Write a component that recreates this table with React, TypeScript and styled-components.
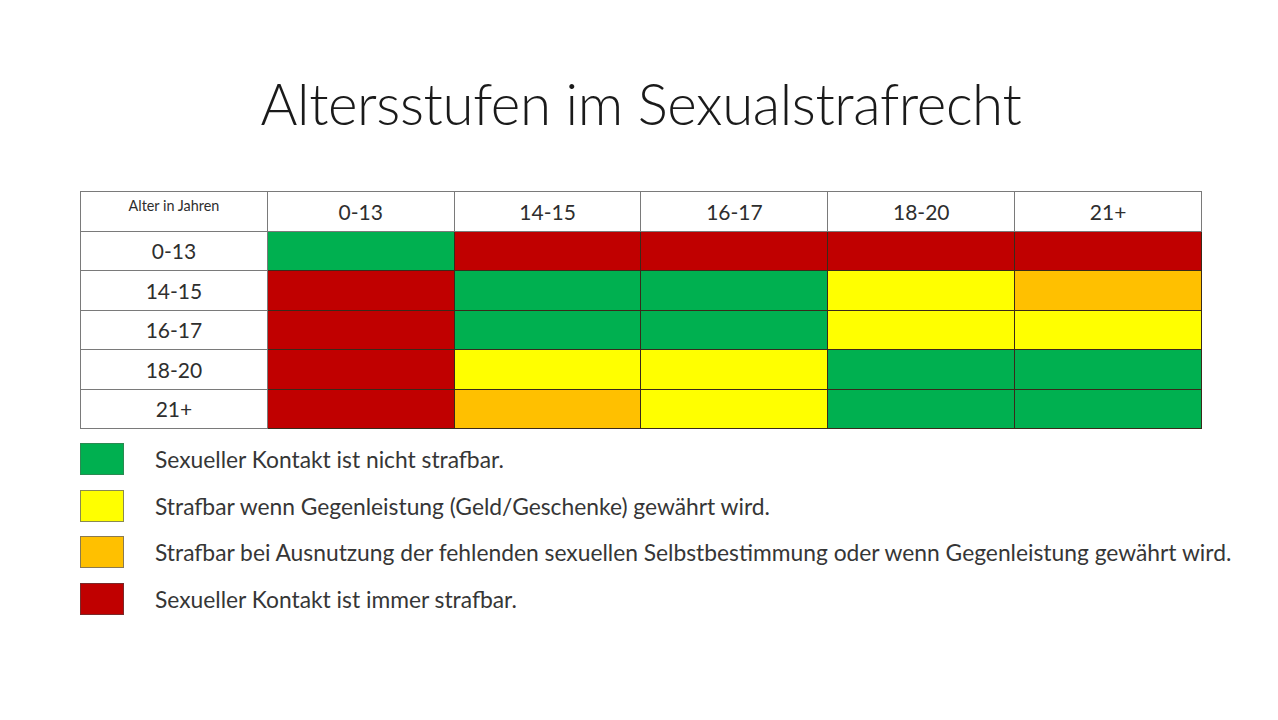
import React from "react";
import styled, { createGlobalStyle } from "styled-components";

const Global = createGlobalStyle`
  html, body { margin: 0; padding: 0; background: #ffffff; }
  body { font-family: Lato, "Open Sans", "Liberation Sans", sans-serif; }
`;

const Slide = styled.div`
  width: 1278px;
  height: 720px;
  background: #ffffff;
  display: flex;
  flex-direction: column;
  align-items: flex-start;
  box-sizing: border-box;
  padding: 0 0 0 80px;
  overflow: hidden;
`;

const Title = styled.h1`
  margin: 70px 0 0 0;
  width: 1122px;
  text-align: center;
  font-family: Lato, "Open Sans", sans-serif;
  font-weight: 300;
  font-size: 56.5px;
  line-height: 66px;
  color: #1a1a1a;
  letter-spacing: -0.4px;
`;

const Grid = styled.div`
  margin-top: 55px;
  width: 1122px;
  height: 238px;
  display: grid;
  grid-template-columns: repeat(6, 1fr);
  grid-template-rows: repeat(6, 1fr);
  border-top: 1px solid #7a7a7a;
  border-left: 1px solid #7a7a7a;
  box-sizing: border-box;
`;

const colors: Record<string, string> = {
  g: "#00b050",
  y: "#ffff00",
  o: "#ffc000",
  r: "#c00000",
};

const Cell = styled.div<{ $bg?: string; $small?: boolean }>`
  background: ${(p) => p.$bg || "#ffffff"};
  border-right: 1px solid ${(p) => (p.$bg ? "#3a2a1a" : "#7a7a7a")};
  border-bottom: 1px solid ${(p) => (p.$bg ? "#3a2a1a" : "#7a7a7a")};
  display: flex;
  align-items: ${(p) => (p.$small ? "flex-start" : "center")};
  justify-content: center;
  padding-top: ${(p) => (p.$small ? "5px" : "0")};
  box-sizing: border-box;
  font-family: Lato, "Open Sans", sans-serif;
  font-size: ${(p) => (p.$small ? "14.4px" : "21px")};
  color: #2e2e2e;
`;

const Legend = styled.div`
  margin-top: 14px;
  display: flex;
  flex-direction: column;
  gap: 14.7px;
`;

const LegendRow = styled.div`
  display: flex;
  align-items: center;
  gap: 31px;
  height: 32px;
`;

const Swatch = styled.div<{ $bg: string; $border: string }>`
  width: 44px;
  height: 32px;
  box-sizing: border-box;
  background: ${(p) => p.$bg};
  border: 1px solid ${(p) => p.$border};
`;

const LegendText = styled.span`
  font-family: Lato, "Open Sans", sans-serif;
  font-size: 22.8px;
  color: #363636;
  letter-spacing: 0px;
`;

const cols = ["0-13", "14-15", "16-17", "18-20", "21+"];
const matrix = [
  ["g", "r", "r", "r", "r"],
  ["r", "g", "g", "y", "o"],
  ["r", "g", "g", "y", "y"],
  ["r", "y", "y", "g", "g"],
  ["r", "o", "y", "g", "g"],
];

const legend = [
  { c: "#00b050", b: "#2b8a52", t: "Sexueller Kontakt ist nicht strafbar." },
  { c: "#ffff00", b: "#8a8a50", t: "Strafbar wenn Gegenleistung (Geld/Geschenke) gewährt wird." },
  {
    c: "#ffc000",
    b: "#8a7a50",
    t: "Strafbar bei Ausnutzung der fehlenden sexuellen Selbstbestimmung oder wenn Gegenleistung gewährt wird.",
  },
  { c: "#c00000", b: "#7a2a2a", t: "Sexueller Kontakt ist immer strafbar." },
];

export default function App() {
  return (
    <>
      <Global />
      <Slide>
        <Title>Altersstufen im Sexualstrafrecht</Title>
        <Grid>
          <Cell $small>Alter in Jahren</Cell>
          {cols.map((c) => (
            <Cell key={c}>{c}</Cell>
          ))}
          {matrix.map((row, i) => (
            <React.Fragment key={i}>
              <Cell>{cols[i]}</Cell>
              {row.map((k, j) => (
                <Cell key={j} $bg={colors[k]} />
              ))}
            </React.Fragment>
          ))}
        </Grid>
        <Legend>
          {legend.map((l) => (
            <LegendRow key={l.t}>
              <Swatch $bg={l.c} $border={l.b} />
              <LegendText>{l.t}</LegendText>
            </LegendRow>
          ))}
        </Legend>
      </Slide>
    </>
  );
}
